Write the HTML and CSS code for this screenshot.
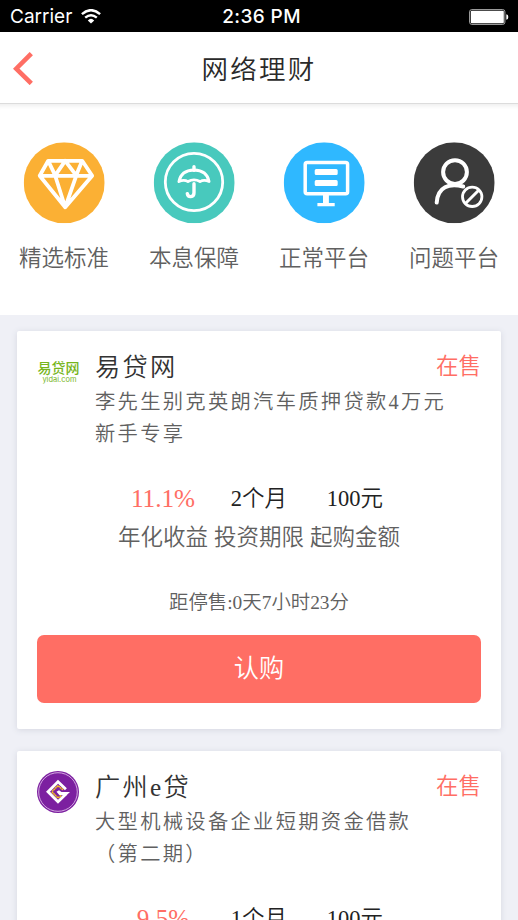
FILE: index.html
```html
<!DOCTYPE html>
<html lang="zh-CN">
<head>
<meta charset="utf-8">
<title>网络理财</title>
<link rel="stylesheet" href="styles.css">
</head>
<body>
<div class="status">
  <div class="carrier"><span>Carrier</span>
    <svg width="20" height="15" viewBox="0 0 20 15" fill="none" stroke="#fff" stroke-width="2.4"><path d="M.9 5.2Q10-2.9 19.1 5.2M4.2 8.7Q10 3.7 15.8 8.7"/><path d="M6.8 11.4Q10 8.3 13.2 11.4L10 14.6Z" fill="#fff" stroke="none"/></svg>
  </div>
  <div class="time">2:36 PM</div>
  <svg class="battery" width="40" height="16" viewBox="0 0 40 16"><rect x=".6" y=".6" width="35.3" height="14.8" rx="2.2" fill="none" stroke="#aaa" stroke-width="1"/><rect x="1.8" y="1.8" width="33" height="12.4" rx="1" fill="#fff"/><path d="M37.3 5.2Q39.3 5.5 39.3 8T37.3 10.8Z" fill="#fff"/></svg>
</div>
<header class="nav">
  <svg width="20" height="33" viewBox="0 0 20 33" fill="none" stroke="#ff6e64" stroke-width="4.6"><path d="M18.3 1.6 3.2 16.7 18.3 31.5"/></svg>
  <h1>网络理财</h1>
</header>
<nav class="menu">
  <a class="item"><svg viewBox="0 0 81 81"><circle cx="40.5" cy="40.5" r="40.5" fill="#fbb034"/><g fill="none" stroke="#fff" stroke-width="3.8" stroke-linejoin="round"><path d="M24.5 18.5H58.5L68.5 33.5 41.5 65 16 33.5ZM16 33.5H68.5M24.5 18.5 31.5 33 41.5 18.5 52.5 33 58.5 18.5M31.5 33.5 41.5 65 52.5 33.5"/></g></svg><span>精选标准</span></a>
  <a class="item"><svg viewBox="0 0 81 81"><circle cx="40.5" cy="40.5" r="40.5" fill="#48c9bd"/><g fill="none" stroke="#fff" stroke-width="2.8" stroke-linecap="round" stroke-linejoin="round"><circle cx="40.3" cy="39.7" r="28.7"/><path d="M40.3 24.5V28" stroke-width="3.4"/><path d="M25.2 39.3Q27.3 28 40.3 27.7 53.3 28 55.4 39.3 50.3 36.8 46.3 39.3 40.3 36 34.3 39.3 30.3 36.8 25.2 39.3Z"/><path d="M40.3 41.5V50.5C40.3 55.5 34.2 55.5 33.6 51.3" stroke-width="3.4"/></g></svg><span>本息保障</span></a>
  <a class="item"><svg viewBox="0 0 81 81"><circle cx="40.5" cy="40.5" r="40.5" fill="#2fb8ff"/><rect x="21.5" y="20.2" width="42.4" height="31.3" rx="2" fill="none" stroke="#fff" stroke-width="3.5"/><path d="M32.5 26.7H52.5Q54 26.7 54 28.2V31.2Q54 32.7 52.5 32.7H32.5Q31 32.7 31 31.2V28.2Q31 26.7 32.5 26.7ZM32.5 37.7H52.5Q54 37.7 54 39.2V42.2Q54 43.7 52.5 43.7H32.5Q31 43.7 31 42.2V39.2Q31 37.7 32.5 37.7ZM39.3 52H45.2V60.7H51V64H33.7V60.7H39.3Z" fill="#fff"/></svg><span>正常平台</span></a>
  <a class="item"><svg viewBox="0 0 81 81"><circle cx="40.5" cy="40.5" r="40.5" fill="#3b3b3b"/><g fill="none" stroke="#fff" stroke-width="4" stroke-linecap="round"><circle cx="41.3" cy="29.8" r="11.9"/><path d="M23 60.3C24 44.5 35.5 40.5 49.5 44.2"/><circle cx="58.5" cy="54.5" r="9.7" stroke-width="2.8"/><path d="M52.5 60.5 64.5 48.5" stroke-width="3"/></g></svg><span>问题平台</span></a>
</nav>
<main>
  <article class="card">
    <div class="top">
      <div class="logo yidai"><b>易贷网</b><i>yidai.com</i></div>
      <div class="info"><h2>易贷网</h2><p>李先生别克英朗汽车质押贷款4万元新手专享</p></div>
      <div class="state">在售</div>
    </div>
    <div class="facts">
      <div><strong class="rate">11.1%</strong><span>年化收益</span></div>
      <div><strong>2个月</strong><span>投资期限</span></div>
      <div><strong>100元</strong><span>起购金额</span></div>
    </div>
    <div class="remain">距停售:0天7小时23分</div>
    <button>认购</button>
  </article>
  <article class="card">
    <div class="top">
      <svg class="logo" viewBox="0 0 42 42"><circle cx="21" cy="21" r="21" fill="#7c1fa0"/><circle cx="21" cy="21" r="19.3" fill="none" stroke="#dcb9e7" stroke-width=".9"/><path d="M28.9 18.2 21 10.8 11 20.8 21 30.8 29 23" fill="none" stroke="#fff" stroke-width="2.8"/><path d="M19.5 20.8 22 19.2 24.5 21H33L29.5 24.3H22.5Z" fill="#fff"/><path d="M26 18.9 21 14.6 14.8 20.8 21 27 24.2 24.6" fill="none" stroke="#f0c020" stroke-width="1.6" stroke-dasharray="1.8 .4"/></svg>
      <div class="info"><h2>广州e贷</h2><p>大型机械设备企业短期资金借款（第二期）</p></div>
      <div class="state">在售</div>
    </div>
    <div class="facts">
      <div><strong class="rate">9.5%</strong></div>
      <div><strong>1个月</strong></div>
      <div><strong>100元</strong></div>
    </div>
  </article>
</main>
</body>
</html>
```
FILE: styles.css
```css
* { box-sizing: border-box; }
html { height: 920px; overflow: hidden; }
body {
  margin: 0; height: 920px; overflow: hidden; background: #eff0f6; color: #333;
  font: 350 22.5px/32px "Liberation Serif", "Noto Sans CJK SC DemiLight", "Noto Sans CJK SC", sans-serif;
}
h1, h2, p { margin: 0; font-weight: 350; }
svg { display: block; flex: none; }
.status {
  height: 32px; padding: 0 9px 0 10px; background: #000; color: #fff;
  display: grid; grid-template-columns: 1fr auto 1fr; align-items: center;
  font: 400 19px/32px Inter, sans-serif;
}
.carrier { display: flex; align-items: center; gap: 9px; padding-top: 1px; }
.carrier svg { margin-top: -2px; }
.time { font-weight: 500; font-size: 19px; letter-spacing: .4px; padding: 1px 0 0 4px; }
.battery { justify-self: end; }
.nav {
  height: 72px; padding-left: 13px; background: #fff; border-bottom: 1px solid #dcdcdc;
  display: grid; grid-template-columns: 20px 1fr 33px; align-items: center;
}
.nav svg { margin-top: 1px; }
.nav h1 { text-align: center; font-size: 26.5px; letter-spacing: 2.3px; color: #2a2a2a; padding-top: 4px; }
.menu {
  height: 211px; padding-top: 38px; background: #fff; box-shadow: inset 0 5px 4px -3px #eee;
  display: grid; grid-template-columns: repeat(4, 130px); margin-left: -1px;
}
.item { display: flex; flex-direction: column; align-items: center; color: #606060; }
.item svg { width: 81px; height: 81px; margin: 0 0 20px; transform: translate(-.3px, .3px); }
main { padding: 16px 17px 0; }
.card {
  height: 398px; margin-bottom: 22px; padding: 19px 20px 0; background: #fff;
  border-radius: 2px; box-shadow: 0 1px 6px #d5d7e0;
}
.top { display: flex; height: 132px; }
.logo { width: 42px; height: 42px; flex: none; margin: 1px 16px 0 0; }
.yidai { display: flex; flex-direction: column; align-items: center; padding: 9px 0 0 1px; color: #77b51c; }
.yidai b { font: 500 14px/14px "Noto Sans CJK SC", sans-serif; white-space: nowrap; height: 15px; }
.yidai i { font: normal 7.5px/9px Inter, sans-serif; margin-left: 2px; }
.info { width: 358px; margin-right: -18px; padding-top: 1px; }
.info h2 { font-size: 25.2px; line-height: 34px; letter-spacing: 2.3px; }
.info p { padding-top: 1px; font-size: 20.3px; line-height: 32px; letter-spacing: 2.3px; color: #606060; }
.state { flex: none; color: #ff6e64; line-height: 32px; padding: 1px 0 0 1px; margin-right: -1px; }
.facts { display: flex; justify-content: center; gap: 6px; text-align: center; }
.facts div { width: 90px; }
.facts strong, .facts span { display: block; font-weight: 350; white-space: nowrap; }
.facts strong { height: 40px; line-height: 33px; color: #222; }
.facts .rate { font-size: 25.2px; line-height: 33px; color: #ff6e64; }
.facts span { color: #606060; }
.remain { margin-top: 33px; text-align: center; font-size: 19.4px; color: #606060; }
button {
  display: block; width: 100%; height: 68px; margin-top: 16px; border: 0; border-radius: 7px;
  background: #ff6e64; color: #fff; font: inherit; font-size: 25.2px;
}
```
